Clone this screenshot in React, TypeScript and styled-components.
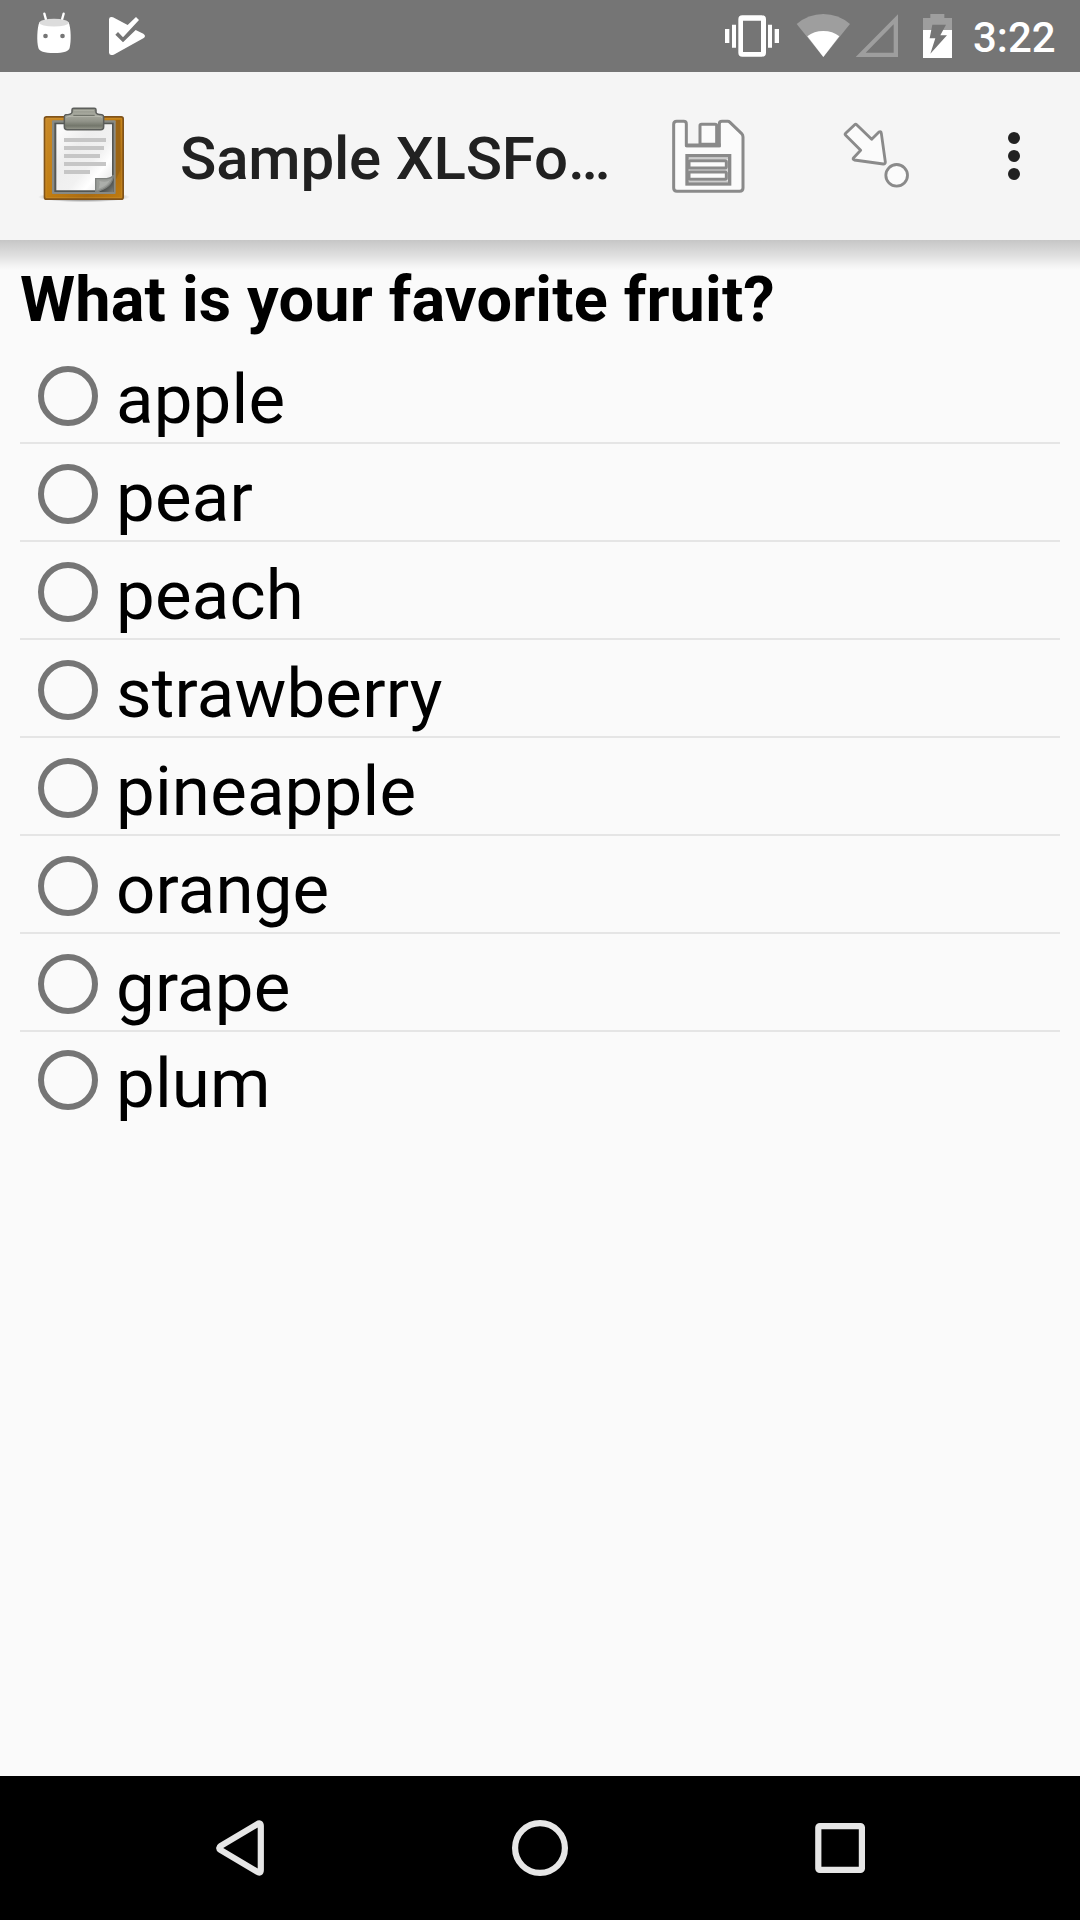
import React from "react";
import styled, { createGlobalStyle } from "styled-components";

const GlobalStyle = createGlobalStyle`
  *, *::before, *::after { box-sizing: border-box; }
  html, body { margin: 0; padding: 0; }
  body { background: #fafafa; font-family: Roboto, "Noto Sans", sans-serif; }
  svg { display: block; flex: none; }
`;

const Screen = styled.div`
  display: flex;
  flex-direction: column;
  width: 1080px;
  height: 1920px;
  overflow: hidden;
  background: #fafafa;
`;

const StatusBar = styled.header`
  display: flex;
  align-items: center;
  justify-content: space-between;
  flex: none;
  height: 72px;
  padding: 0 23px 0 35px;
  background: #757575;
`;

const StatusGroup = styled.div`
  display: flex;
  align-items: center;
`;

const Spacer = styled.span<{ $w: number }>`
  flex: none;
  width: ${(p) => p.$w}px;
`;

const Clock = styled.time`
  width: 84px;
  padding-top: 4px;
  color: #fff;
  font-size: 42px;
  font-weight: 500;
  line-height: 50px;
  white-space: nowrap;
`;

const AppBar = styled.div`
  display: flex;
  align-items: center;
  flex: none;
  height: 168px;
  padding: 0 52px 0 30px;
  background: #f5f5f5;
`;

const Title = styled.h1`
  flex: 1;
  margin: 0;
  padding: 6px 0 0 40px;
  color: #212121;
  font-size: 60px;
  font-weight: 500;
  letter-spacing: -0.18px;
  line-height: 70px;
  white-space: nowrap;
`;

const IconButton = styled.button<{ $gap?: number }>`
  flex: none;
  margin: 0 ${(p) => p.$gap ?? 0}px 0 0;
  padding: 0;
  border: 0;
  background: none;
`;

const Content = styled.main`
  flex: 1;
  padding: 23px 20px 0;
  background: linear-gradient(#c6c6c6, #e0e0e0 16px, #f4f4f4 26px, #fafafa 30px);
`;

const Question = styled.h2`
  margin: 0;
  padding-bottom: 9px;
  color: #000;
  font-size: 63px;
  font-weight: 700;
  letter-spacing: 0.16px;
  line-height: 74px;
  white-space: nowrap;
`;

const Options = styled.ul`
  margin: 0;
  padding: 0;
  list-style: none;
`;

const Option = styled.li`
  display: flex;
  align-items: flex-start;
  height: 98px;
  padding: 13px 0 0 18px;
  border-bottom: 2px solid #e5e5e5;

  &:last-child {
    padding-top: 11px;
    border-bottom: 0;
  }
`;

const Radio = styled.span`
  flex: none;
  width: 60px;
  height: 60px;
  margin: 7px 18px 0 0;
  border: 6px solid #757575;
  border-radius: 50%;
`;

const OptionLabel = styled.span`
  color: #000;
  font-size: 69px;
  letter-spacing: 0.17px;
  line-height: 81px;
`;

const NavBar = styled.nav`
  display: flex;
  flex: none;
  height: 144px;
  padding: 0 90px;
  background: #000;
`;

const NavButton = styled.button`
  display: flex;
  flex: 1;
  align-items: center;
  justify-content: center;
  padding: 0;
  border: 0;
  background: none;
`;

const AndroidHead = () => (
  <svg width="38" height="50" viewBox="105 33 114 150">
    <path d="M133 41l7 25M191 41l-7 25" stroke="#fff" strokeWidth="7" strokeLinecap="round" />
    <path d="M118 67C111 84 110 126 115 143Q118 159 162 159Q206 159 209 143C214 126 213 84 206 67Z" fill="#fff" />
    <ellipse cx="162" cy="68" rx="44" ry="11.5" fill="#dcdcdc" />
    <circle cx="136.500" cy="108" r="7" fill="#757575" />
    <circle cx="187.500" cy="108" r="7" fill="#757575" />
  </svg>
);

const PlayCheck = () => (
  <svg width="38" height="40" viewBox="324 48 114 120">
    <path d="M327 58Q328 48 339 52L383 75L408 51L417 60L369 112L354 96L346 104L369 127L407 90L430 101Q440 108 430 115L341 164Q328 168 327 158Z" fill="#fff" />
  </svg>
);

const Vibrate = () => (
  <svg width="56" height="44" viewBox="72 42 168 132">
    <path fill="#fff" fillRule="evenodd" d="M127 46H185Q198 46 198 58V158Q198 170 185 170H127Q115 170 115 158V58Q115 46 127 46ZM129 62V156H183V62Z" />
    <path fill="#fff" d="M75 87h13v42H75zM96 74h12v69H96zM204 74h12v69h-12zM224 87h13v42h-13z" />
  </svg>
);

const Wifi = () => (
  <svg width="55" height="44" viewBox="288 42 165 132">
    <path d="M290 72Q325 42 370 42Q415 42 450 72L370 171Z" fill="#9e9e9e" />
    <path d="M322 109Q342 93 370 93Q398 93 418 109L370 171Z" fill="#fff" />
  </svg>
);

const Signal = () => (
  <svg width="44" height="44" viewBox="465 42 132 132">
    <path d="M467 171L594 43V171ZM497 158H581V73Z" fill="#9e9e9e" fillRule="evenodd" />
  </svg>
);

const Battery = () => (
  <svg width="31" height="44" viewBox="666 42 93 132">
    <path d="M691 42h42v12h23v36h-87V54h22z" fill="#9e9e9e" />
    <path d="M669 90h87v84h-87z" fill="#fff" />
    <path d="M697 74H738L721 106H741L691 161L706 115H689Z" fill="#757575" />
  </svg>
);

const Clipboard = () => (
  <svg width="110" height="122" viewBox="0 0 330 366">
    <defs>
      <linearGradient id="board" x1="0" y1="0" x2="1" y2="1">
        <stop offset="0" stopColor="#c98a29" />
        <stop offset="0.5" stopColor="#c17d11" />
        <stop offset="0.75" stopColor="#a96b12" />
        <stop offset="1" stopColor="#c17d11" />
      </linearGradient>
      <linearGradient id="sheet" x1="0" y1="0" x2="1" y2="1">
        <stop offset="0" stopColor="#ffffff" />
        <stop offset="0.35" stopColor="#eeeeee" />
        <stop offset="0.6" stopColor="#f1f1f1" />
        <stop offset="0.75" stopColor="#ffffff" />
        <stop offset="1" stopColor="#dddddd" />
      </linearGradient>
      <linearGradient id="clip" x1="0" y1="0" x2="0" y2="1">
        <stop offset="0" stopColor="#8b8d83" />
        <stop offset="0.28" stopColor="#a9aba0" />
        <stop offset="0.6" stopColor="#92948a" />
        <stop offset="0.82" stopColor="#73766b" />
        <stop offset="1" stopColor="#999b90" />
      </linearGradient>
      <linearGradient id="curl" x1="0" y1="0" x2="1" y2="1">
        <stop offset="0" stopColor="#777a77" />
        <stop offset="0.4" stopColor="#b7b9b6" />
        <stop offset="0.58" stopColor="#7f827f" />
        <stop offset="0.62" stopColor="#484b48" />
        <stop offset="1" stopColor="#7b7e7b" />
      </linearGradient>
      <radialGradient id="ground">
        <stop offset="0.6" stopColor="#000" stopOpacity="0.35" />
        <stop offset="1" stopColor="#000" stopOpacity="0" />
      </radialGradient>
    </defs>
    <ellipse cx="162" cy="306" rx="138" ry="16" fill="url(#ground)" />
    <rect x="43.500" y="65.500" width="236" height="247" rx="6" fill="url(#board)" stroke="#80531a" strokeWidth="5" />
    <rect x="48" y="70" width="227" height="238" rx="3" fill="none" stroke="#d49a3c" strokeWidth="2" opacity="0.55" />
    <path d="M257 75h14v150l-14 30z" fill="#9c6515" />
    <rect x="66" y="76" width="191" height="221" rx="3" fill="#888a85" />
    <rect x="73" y="83" width="178" height="208" fill="#555753" />
    <path d="M79 88H246V286H79Z" fill="url(#sheet)" />
    <path d="M102 129h126v12H102zM102 153h120v12H102zM102 177h108v12H102zM102 201h126v12H102zM102 225h78v12h-78z" fill="#c6c6c6" />
    <path d="M196 249H229Q246 248 250 240V291H196Z" fill="url(#curl)" />
    <path d="M197 290V251H230Q247 249 250 240Q248 279 197 290Z" fill="#9a9d99" stroke="#7f827f" strokeWidth="4" />
    <path d="M206 281Q211 267 208 258Q229 264 240 255Q231 274 206 281Z" fill="#b9bbb8" opacity="0.55" />
    <path d="M107 59Q124 59 126 52V44Q126 40 131 40H193Q198 40 198 44V52Q199 59 216 59Q221 60 221 66V95Q221 104 212 104H112Q103 104 103 95V66Q103 60 107 59Z" fill="url(#clip)" stroke="#5c5e5b" strokeWidth="4.500" />
    <path d="M131 47H192M109 68Q110 64 124 64H201Q216 64 216 68" fill="none" stroke="#cbcdc3" strokeWidth="2.500" opacity="0.6" />
    <path d="M130 61H194" stroke="#65685f" strokeWidth="3" />
  </svg>
);

const SaveIcon = () => (
  <svg width="110" height="112" viewBox="0 0 330 336">
    <g fill="#fbfbfb" stroke="#8a8a8a" strokeWidth="9" strokeLinejoin="round">
      <path d="M80 64H101Q109 64 109 72V137H208V72Q208 64 216 64H233Q237 64 240 67L275 101Q279 105 279 111V264Q279 274 269 274H81Q71 274 71 264V73Q71 64 80 64Z" />
      <path d="M150 133V77Q150 73 155 73H195Q200 73 200 77V133Z" />
      <path d="M204 76V136M109 136H212" fill="none" strokeWidth="11" />
      <rect x="111" y="167" width="128" height="85" strokeWidth="10" strokeLinejoin="miter" />
      <rect x="117" y="182" width="112" height="22" rx="3" />
      <rect x="117" y="216" width="112" height="22" rx="3" />
      <path d="M112 175H236V245H112M112 210H236" fill="none" strokeWidth="5" opacity="0.4" />
    </g>
  </svg>
);

const JumpIcon = () => (
  <svg width="110" height="112" viewBox="0 0 330 336">
    <g fill="#fbfbfb" stroke="#8a8a8a" strokeWidth="8.500" strokeLinejoin="round">
      <path d="M104 74Q107 71 110 74L155 118L177 96Q183 93 184 100L196 186Q196 192 190 192L103 180Q97 178 101 173L122 151L77 106Q74 103 77 100Z" />
      <circle cx="230" cy="226" r="32.500" />
    </g>
  </svg>
);

const MoreIcon = () => (
  <svg width="28" height="112" viewBox="540 0 84 336">
    <g fill="#212121">
      <circle cx="582" cy="114" r="18" />
      <circle cx="582" cy="168" r="18" />
      <circle cx="582" cy="222" r="18" />
    </g>
  </svg>
);

const navIcons = [
  {
    label: "Back",
    art: <path d="M20.800 37.800Q17.500 40 20.800 42.200L57 63.700Q60.800 66 60.800 62V18Q60.800 14 57 16.300Z" />,
  },
  { label: "Home", art: <circle cx="40" cy="40" r="24.900" /> },
  { label: "Recents", art: <rect x="18.300" y="18.100" width="43.600" height="43.800" rx="1.500" /> },
];

const fruits = ["apple", "pear", "peach", "strawberry", "pineapple", "orange", "grape", "plum"];

export default function App() {
  return (
    <Screen>
      <GlobalStyle />
      <StatusBar>
        <StatusGroup>
          <AndroidHead />
          <Spacer $w={35} />
          <PlayCheck />
        </StatusGroup>
        <StatusGroup>
          <Vibrate />
          <Spacer $w={16} />
          <Wifi />
          <Spacer $w={4} />
          <Signal />
          <Spacer $w={23} />
          <Battery />
          <Spacer $w={20} />
          <Clock>3:22</Clock>
        </StatusGroup>
      </StatusBar>
      <AppBar>
        <Clipboard />
        <Title>Sample XLSFo…</Title>
        <IconButton $gap={60} aria-label="Save"><SaveIcon /></IconButton>
        <IconButton $gap={70} aria-label="Go to prompt"><JumpIcon /></IconButton>
        <IconButton aria-label="More options"><MoreIcon /></IconButton>
      </AppBar>
      <Content>
        <Question>What is your favorite fruit?</Question>
        <Options>
          {fruits.map((fruit) => (
            <Option key={fruit}>
              <Radio />
              <OptionLabel>{fruit}</OptionLabel>
            </Option>
          ))}
        </Options>
      </Content>
      <NavBar>
        {navIcons.map(({ label, art }) => (
          <NavButton key={label} aria-label={label}>
            <svg width="80" height="80" viewBox="0 0 80 80" fill="none" stroke="#e6e6e6" strokeWidth="6.200" strokeLinejoin="round">
              {art}
            </svg>
          </NavButton>
        ))}
      </NavBar>
    </Screen>
  );
}
